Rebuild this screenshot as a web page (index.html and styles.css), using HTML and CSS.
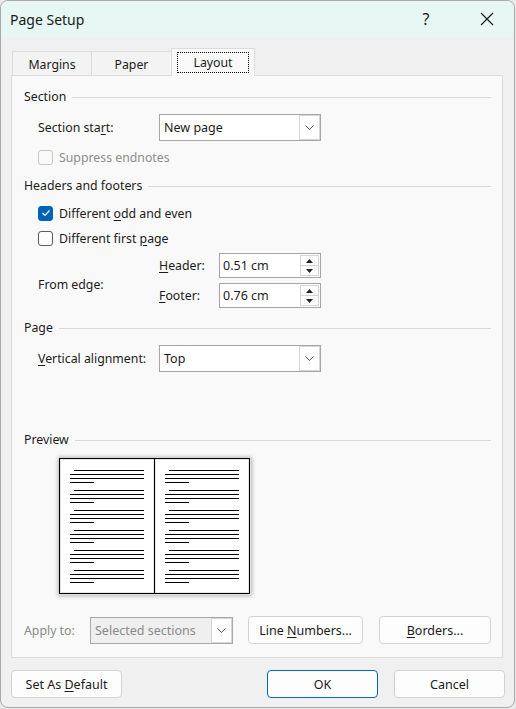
FILE: index.html
```html
<!DOCTYPE html>
<html>
<head>
<meta charset="utf-8">
<link rel="stylesheet" href="styles.css">
</head>
<body>
<div class="window">
  <div class="titlebar">
    <span class="title">Page Setup</span>
    <div class="title-btns">
      <span class="help">?</span>
      <span class="close">
        <svg width="14" height="14" viewBox="0 0 14 14"><path d="M1 1 L13 13 M13 1 L1 13" stroke="#1a1a1a" stroke-width="1.2" fill="none"/></svg>
      </span>
    </div>
  </div>

  <div class="tabs">
    <div class="tab t-margins">Margins</div>
    <div class="tab t-paper">Paper</div>
    <div class="tab t-layout active"><span class="focus">Layout</span></div>
  </div>

  <div class="panel">
    <div class="group-head g-section"><span>Section</span><i></i></div>

    <div class="row r-start">
      <span class="lbl">Section sta<u>r</u>t:</span>
      <div class="combo">
        <span class="combo-text">New page</span>
        <span class="combo-btn"><svg width="9" height="5" viewBox="0 0 9 5"><path d="M0.5 0.5 L4.5 4.5 L8.5 0.5" stroke="#555" stroke-width="1" fill="none"/></svg></span>
      </div>
    </div>

    <div class="check disabled r-suppress"><span class="box"></span><span>Suppress endnotes</span></div>

    <div class="group-head g-hf"><span>Headers and footers</span><i></i></div>

    <div class="check checked r-odd"><span class="box"><svg width="10" height="8" viewBox="0 0 10 8"><path d="M1.5 4 L4 6.5 L8.5 1.5" stroke="#fff" stroke-width="1.2" fill="none"/></svg></span><span>Different <u>o</u>dd and even</span></div>
    <div class="check r-first"><span class="box"></span><span>Different first <u>p</u>age</span></div>

    <div class="edge">
      <span class="edge-lbl">From edge:</span>
      <span class="sub-lbl"><u>H</u>eader:</span>
      <div class="spin"><span class="spin-text">0.51 cm</span><span class="spin-btns"><span class="sb"><svg width="7" height="4" viewBox="0 0 7 4"><path d="M0 4 L3.5 0 L7 4 Z" fill="#222"/></svg></span><span class="sb"><svg width="7" height="4" viewBox="0 0 7 4"><path d="M0 0 L3.5 4 L7 0 Z" fill="#222"/></svg></span></span></div>
      <span class="sub-lbl"><u>F</u>ooter:</span>
      <div class="spin"><span class="spin-text">0.76 cm</span><span class="spin-btns"><span class="sb"><svg width="7" height="4" viewBox="0 0 7 4"><path d="M0 4 L3.5 0 L7 4 Z" fill="#222"/></svg></span><span class="sb"><svg width="7" height="4" viewBox="0 0 7 4"><path d="M0 0 L3.5 4 L7 0 Z" fill="#222"/></svg></span></span></div>
    </div>

    <div class="group-head g-page"><span>Page</span><i></i></div>

    <div class="row r-valign">
      <span class="lbl"><u>V</u>ertical alignment:</span>
      <div class="combo">
        <span class="combo-text">Top</span>
        <span class="combo-btn"><svg width="9" height="5" viewBox="0 0 9 5"><path d="M0.5 0.5 L4.5 4.5 L8.5 0.5" stroke="#555" stroke-width="1" fill="none"/></svg></span>
      </div>
    </div>

    <div class="group-head g-preview"><span>Preview</span><i></i></div>

    <div class="preview">
      <svg width="192" height="137" viewBox="0 0 192 137">
        <rect x="0.5" y="0.5" width="190" height="135" fill="#fff" stroke="#000" stroke-width="1.2"/>
        <line x1="95.5" y1="0" x2="95.5" y2="136" stroke="#000" stroke-width="1.2"/>
        <g stroke="#000" stroke-width="1">
          <g id="para">
            <line x1="15" y1="12.5" x2="85" y2="12.5"/>
            <line x1="11" y1="16.5" x2="85" y2="16.5"/>
            <line x1="11" y1="20.5" x2="85" y2="20.5"/>
            <line x1="11" y1="24.5" x2="35" y2="24.5"/>
          </g>
          <use href="#para" y="20"/><use href="#para" y="40"/><use href="#para" y="60"/><use href="#para" y="80"/><use href="#para" y="100"/>
          <use href="#para" x="95"/><use href="#para" x="95" y="20"/><use href="#para" x="95" y="40"/><use href="#para" x="95" y="60"/><use href="#para" x="95" y="80"/><use href="#para" x="95" y="100"/>
        </g>
      </svg>
    </div>

    <div class="bottom-row">
      <span class="apply-lbl">Apply to:</span>
      <div class="combo combo-dis">
        <span class="combo-text">Selected sections</span>
        <span class="combo-btn"><svg width="9" height="5" viewBox="0 0 9 5"><path d="M0.5 0.5 L4.5 4.5 L8.5 0.5" stroke="#555" stroke-width="1" fill="none"/></svg></span>
      </div>
      <button class="btn b-line">Line <u>N</u>umbers...</button>
      <button class="btn b-borders"><u>B</u>orders...</button>
    </div>
  </div>

  <div class="footer">
    <button class="btn b-default">Set As <u>D</u>efault</button>
    <div class="footer-right">
      <button class="btn b-ok">OK</button>
      <button class="btn b-cancel">Cancel</button>
    </div>
  </div>
</div>
</body>
</html>
```

FILE: styles.css
```css
* { box-sizing: border-box; }
html, body { margin: 0; padding: 0; }
body {
  background: #e9e9e9;
  font-family: "Noto Sans", "Open Sans", sans-serif;
  font-size: 12.3px;
  color: #1b1b1b;
  width: 516px;
  height: 709px;
  overflow: hidden;
}
u { text-decoration: underline; text-underline-offset: 2px; }

.window {
  width: 515px;
  height: 708px;
  background: #f0f0f0;
  border: 1px solid #a9a9a9;
  border-radius: 8px;
  overflow: hidden;
  display: flex;
  flex-direction: column;
}

.titlebar {
  height: 36px;
  background: #e6f7f4;
  display: flex;
  align-items: center;
  justify-content: space-between;
  padding-left: 9px;
  flex: none;
}
.title { font-size: 14px; color: #1a1a1a; }
.title-btns { display: flex; align-items: center; margin-right: 4px; }
.help { width: 40px; text-align: center; font-size: 16px; color: #222; margin-right: 18px; }
.close { width: 46px; display: flex; justify-content: center; align-items: center; }

.tabs {
  display: flex;
  align-items: flex-end;
  margin: 10px 0 0 11px;
  height: 28px;
  flex: none;
}
.tab {
  height: 24px;
  border: 1px solid #dcdcdc;
  border-bottom: none;
  background: #f3f3f3;
  display: flex;
  align-items: center;
  justify-content: center;
  padding-top: 2px;
  color: #1b1b1b;
}
.t-margins { width: 80px; }
.t-paper { width: 81px; margin-left: -1px; }
.t-layout { width: 84px; margin-left: -1px; }
.tab.active {
  height: 28px;
  background: #f9f9f9;
  position: relative;
  z-index: 2;
  margin-bottom: -1px;
  padding-top: 0;
  align-items: flex-start;
}
.focus {
  margin-top: 3px;
  width: 72px;
  height: 21px;
  border: 1px dotted #000;
  display: flex;
  align-items: center;
  justify-content: center;
}

.panel {
  margin: 0 11px 0 10px;
  height: 583px;
  background: #f9f9f9;
  border: 1px solid #dcdcdc;
  padding: 0 11px 13px 12px;
  display: flex;
  flex-direction: column;
  flex: none;
}

.group-head {
  display: flex;
  align-items: center;
  height: 16px;
  line-height: 16px;
}
.group-head i { flex: 1; height: 1px; background: #dadada; margin-left: 6px; }
.g-section { margin-top: 13px; }
.g-hf { margin-top: 12px; }
.g-page { margin-top: 12px; }
.g-preview { margin-top: 60px; }

.row { display: flex; align-items: center; height: 27px; padding-left: 14px; }
.r-start { margin-top: 9px; }
.r-valign { margin-top: 9px; }
.lbl { width: 121px; }

.combo {
  width: 162px;
  height: 27px;
  background: #fff;
  border: 1px solid #a5a5a5;
  display: flex;
  align-items: stretch;
}
.combo-text { flex: 1; display: flex; align-items: center; padding-left: 4px; font-size: 12.5px; }
.combo-btn {
  width: 21px;
  border: 1px solid #d6d6d6;
  background: #fff;
  display: flex;
  align-items: center;
  justify-content: center;
}

.check { display: flex; align-items: center; height: 18px; padding-left: 14px; }
.check .box {
  width: 15px; height: 15px;
  border: 1px solid #5c5c5c;
  border-radius: 3px;
  background: #fbfbfb;
  margin-right: 6px;
  display: flex; align-items: center; justify-content: center;
}
.check.checked .box { background: #0063b8; border-color: #0063b8; }
.check.disabled { color: #8d8d8d; }
.check.disabled .box { border-color: #c6c6c6; background: #f9f9f9; }
.r-suppress { margin-top: 7px; }
.r-odd { margin-top: 10px; }
.r-first { margin-top: 7px; }

.edge {
  margin-top: 6px;
  padding-left: 14px;
  display: grid;
  grid-template-columns: 121px 60px 102px;
  grid-template-rows: 25px 25px;
  row-gap: 5px;
  align-items: center;
}
.edge-lbl { grid-row: 1 / 3; grid-column: 1; padding-top: 7px; }
.sub-lbl { grid-column: 2; }
.spin {
  grid-column: 3;
  height: 25px;
  background: #fff;
  border: 1px solid #a5a5a5;
  display: flex;
}
.spin-text { flex: 1; display: flex; align-items: center; padding-left: 3px; font-size: 12.5px; }
.spin-btns { width: 19px; margin: 1px 1px 1px 0; display: flex; flex-direction: column; }
.sb {
  flex: 1;
  border: 1px solid #d4d4d4;
  background: #fdfdfd;
  display: flex; align-items: center; justify-content: center;
}
.sb + .sb { border-top: none; }

.preview { margin: 10px 0 0 35px; height: 137px; }
.preview svg { display: block; box-shadow: 0 0 4px 1px rgba(0,0,0,0.28); }

.bottom-row { margin-top: 21px; display: flex; align-items: center; height: 28px; }
.apply-lbl { width: 66px; color: #8a8a8a; }
.combo-dis { width: 143px; background: #efefef; border-color: #a8a8a8; color: #8a8a8a; }
.combo-dis .combo-btn { width: 21px; background: #fff; border-color: #d6d6d6; }

.btn {
  font-family: inherit;
  font-size: 12.5px;
  color: #1b1b1b;
  height: 28px;
  background: #fdfdfd;
  border: 1px solid #d3d3d3;
  border-radius: 4px;
  padding: 0;
}
.b-line { width: 115px; margin-left: 15px; }
.b-borders { width: 112px; margin-left: 16px; }

.footer {
  margin-top: 12px;
  padding: 0 9px 0 10px;
  display: flex;
  justify-content: space-between;
  flex: none;
}
.footer-right { display: flex; gap: 16px; }
.b-default, .b-ok, .b-cancel { width: 111px; }
.b-ok { border-color: #0067c0; }
```
